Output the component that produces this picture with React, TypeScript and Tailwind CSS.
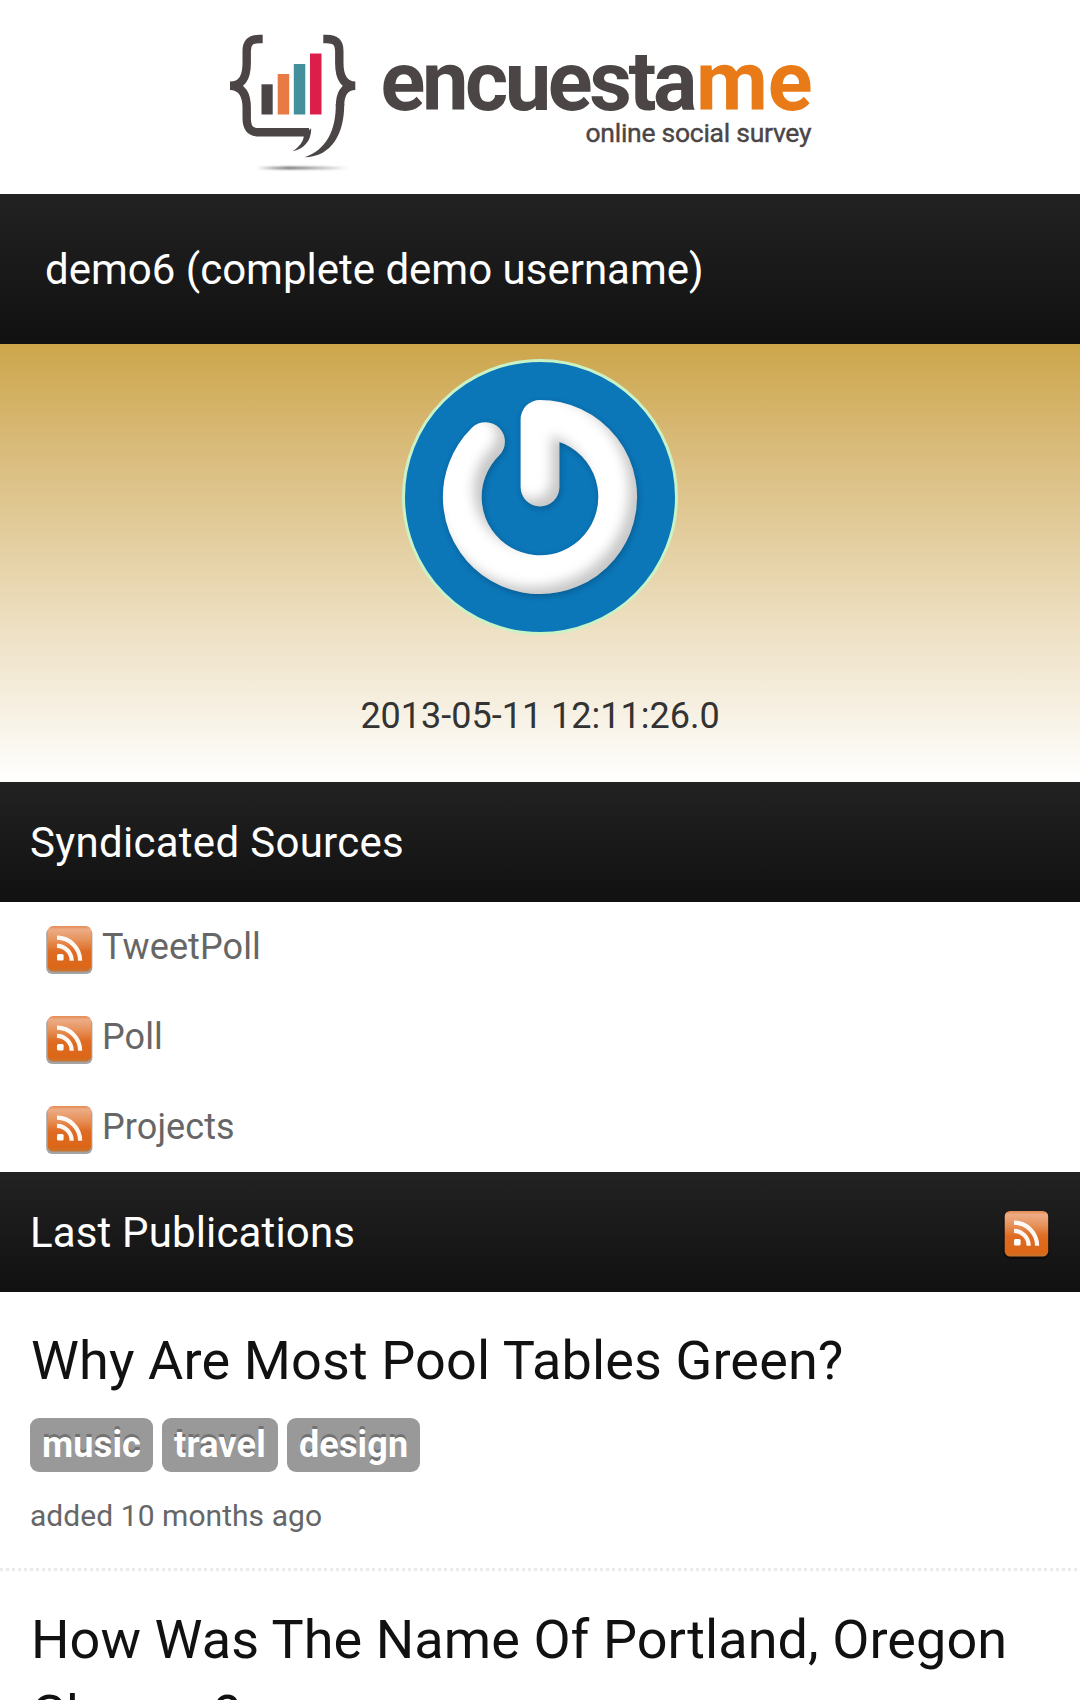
function Logo() {
  return (
    <svg viewBox="210 20 620 160" className="h-[160px] w-[620px]" aria-label="encuestame online social survey">
      <defs>
        <linearGradient id="logoShade" x1="0" x2="1" y1="0" y2="0">
          <stop offset="0" stopColor="#333" stopOpacity="0.2" />
          <stop offset="0.35" stopColor="#333" stopOpacity="0.8" />
          <stop offset="1" stopColor="#333" stopOpacity="0.05" />
        </linearGradient>
        <filter id="logoSoft" x="-5%" y="-200%" width="110%" height="500%">
          <feGaussianBlur stdDeviation="0.8" />
        </filter>
      </defs>
      <g fill="none" stroke="#4b4545" strokeWidth="8.4">
        <path d="M262.7 39H259.5C250 39 246.7 43 246.7 51V63C246.7 76 243 85.7 230 85.7C243 85.7 246.7 96 246.7 108V118C246.7 128 250 132.3 259 132.3H309" />
        <path d="M323.3 39H326.5C336 39 339.3 43 339.3 51V63C339.3 76 343 85.7 355.3 85.7C343 85.7 340 96 340 106" />
      </g>
      <g fill="#4b4545">
        <path d="M311.2 128.2C311.5 142 303 149 292.5 151.3C299 147 303.5 142 304 135Z" />
        <path d="M344.2 104C344.5 133 332 157 304.5 157.2C326 150 336 131 335.8 104Z" />
        <rect x="261.5" y="84.3" width="11.2" height="30.2" />
      </g>
      <rect x="277.7" y="74" width="11.5" height="40.5" fill="#e87b45" />
      <rect x="293.8" y="64" width="11.5" height="50.5" fill="#43909c" />
      <rect x="310" y="53.5" width="11.5" height="61" fill="#dc1e4b" />
      <ellipse cx="303" cy="168" rx="46" ry="1.3" fill="url(#logoShade)" filter="url(#logoSoft)" />
      <g className="font-['Roboto',sans-serif] text-[83px] font-bold">
        <text x="380.5" y="110.3" textLength="317" lengthAdjust="spacing" fill="#4b4545">encuesta</text>
        <text x="696" y="110.3" textLength="116.5" lengthAdjust="spacing" fill="#e87a17">me</text>
      </g>
      <text x="585.5" y="141.8" textLength="226" lengthAdjust="spacing" fill="#4b4545" stroke="#4b4545" strokeWidth="0.4" className="font-['Roboto',sans-serif] text-[26.5px] font-normal">online social survey</text>
    </svg>
  );
}

function Avatar() {
  return (
    <div className="size-[276px] overflow-hidden rounded-full border-3 border-[#c9f2c7] bg-[#0b76b8]">
      <svg viewBox="0 0 270 270" className="size-[270px]">
        <defs>
          <filter id="bevel" x="-20%" y="-20%" width="140%" height="140%" colorInterpolationFilters="sRGB">
            <feOffset in="SourceAlpha" dx="-8" dy="-7" result="moved" />
            <feGaussianBlur in="moved" stdDeviation="6" result="soft" />
            <feComposite in="SourceAlpha" in2="soft" operator="out" result="edge" />
            <feFlood floodColor="#000" floodOpacity="0.22" />
            <feComposite in2="edge" operator="in" result="shade" />
            <feGaussianBlur in="SourceAlpha" stdDeviation="3" result="dropBlur" />
            <feOffset in="dropBlur" dx="1" dy="1.5" result="drop" />
            <feComponentTransfer in="drop" result="dropSoft">
              <feFuncA type="linear" slope="0.22" />
            </feComponentTransfer>
            <feMerge>
              <feMergeNode in="dropSoft" />
              <feMergeNode in="SourceGraphic" />
              <feMergeNode in="shade" />
            </feMerge>
          </filter>
        </defs>
        <path d="M135 125V57.3A77.7 77.7 0 1 1 80.5 79.6" fill="none" stroke="#fff" strokeWidth="38.8" strokeLinecap="round" strokeLinejoin="round" filter="url(#bevel)" />
      </svg>
    </div>
  );
}

function RssIcon() {
  return (
    <svg viewBox="0 0 16 16" className="size-12 shrink-0">
      <defs>
        <linearGradient id="rssFill" x1="0" x2="0" y1="0" y2="1">
          <stop offset="0" stopColor="#e58a50" />
          <stop offset="0.08" stopColor="#ecac86" />
          <stop offset="0.3" stopColor="#e7935c" />
          <stop offset="0.55" stopColor="#de6c23" />
          <stop offset="0.9" stopColor="#dc6618" />
          <stop offset="1" stopColor="#c9762f" />
        </linearGradient>
        <filter id="rssSoft" x="-10%" y="-10%" width="120%" height="120%">
          <feGaussianBlur stdDeviation="0.25" />
        </filter>
      </defs>
      <g filter="url(#rssSoft)">
        <rect x="0.4" y="0.6" width="15.4" height="15.4" rx="2" fill="#000" fillOpacity="0.36" />
        <rect x="0.9" y="0" width="14.5" height="15.2" rx="1.8" fill="url(#rssFill)" />
        <rect x="4" y="9.3" width="2.2" height="2.2" rx="0.5" fill="#fff" />
        <path d="M4 6.6A5 5 0 0 1 8.9 11.6M4 3.9A7.7 7.7 0 0 1 11.7 11.6" fill="none" stroke="#fff" strokeOpacity="0.95" strokeWidth="1.4" />
      </g>
    </svg>
  );
}

const sources = ["TweetPoll", "Poll", "Projects"];
const tags = ["music", "travel", "design"];

export default function App() {
  return (
    <div className="h-[1700px] w-[1080px] overflow-hidden bg-white font-['Roboto',sans-serif]">
      <header className="flex h-[194px] justify-center pt-5 pr-10">
        <Logo />
      </header>

      <h1 className="h-[150px] bg-linear-to-b from-[#222] to-[#111] pt-[46px] pl-[45px] text-[42px] leading-[59px] font-normal text-white">
        demo6 (complete demo username)
      </h1>

      <section className="flex h-[438px] flex-col items-center bg-linear-to-b from-[#cda64a] to-white pt-[15px]">
        <Avatar />
        <p className="mt-[54px] text-[36px] leading-[54px] text-[#333]">2013-05-11 12:11:26.0</p>
      </section>

      <h2 className="h-[120px] bg-linear-to-b from-[#222] to-[#111] pt-[31px] pl-[30px] text-[42px] leading-[59px] font-normal tracking-[0.3px] text-white">
        Syndicated Sources
      </h2>

      <ul className="text-[#666]">
        {sources.map((name) => (
          <li key={name} className="flex h-[90px] items-start gap-[9px] pl-[45px] text-[36px]">
            <span className="mt-6">
              <RssIcon />
            </span>
            <span className="mt-[18px] leading-[54px] tracking-[0.1px]">{name}</span>
          </li>
        ))}
      </ul>

      <div className="flex h-[120px] items-start justify-between bg-linear-to-b from-[#222] to-[#111] pr-[30px] pl-[30px] text-white">
        <h2 className="mt-[31px] text-[42px] leading-[59px] font-normal tracking-[0.15px]">Last Publications</h2>
        <span className="mt-[39px]">
          <RssIcon />
        </span>
      </div>

      <article className="px-[30px] pt-[31px] pb-[30px]">
        <h3 className="pl-px text-[54px] leading-[75px] font-normal tracking-[0.13px] text-[#111]">
          Why Are Most Pool Tables Green?
        </h3>
        <div className="mt-5 flex gap-[9px]">
          {tags.map((tag) => (
            <span
              key={tag}
              className="rounded-[9px] bg-[#999] px-3 text-[36px] leading-[54px] font-bold tracking-[0.18px] text-white [text-shadow:0_-3px_0_rgba(0,0,0,0.25)]"
            >
              {tag}
            </span>
          ))}
        </div>
        <p className="mt-[21px] text-[30px] leading-[45px] tracking-[0.05px] text-[#666]">added 10 months ago</p>
      </article>

      <div className="h-[3px] bg-[repeating-linear-gradient(to_right,#eaeaea_0_3px,transparent_3px_6px)]" />

      <article className="px-[30px] pt-[31px]">
        <h3 className="pl-px text-[54px] leading-[75px] font-normal tracking-[0.07px] text-[#111]">
          How Was The Name Of Portland, Oregon Change?
        </h3>
      </article>
    </div>
  );
}
